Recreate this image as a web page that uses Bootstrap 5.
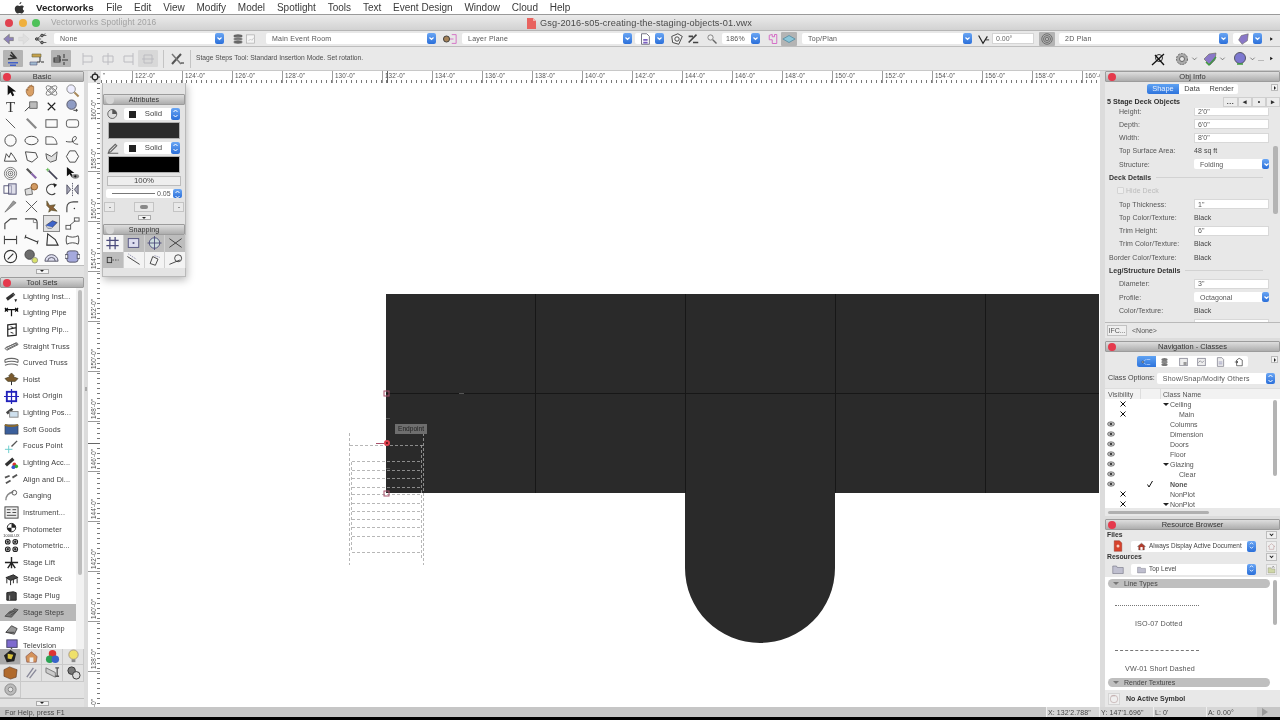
<!DOCTYPE html>
<html lang="en">

<head>
  <meta charset="UTF-8">
  <meta name="viewport" content="width=device-width, initial-scale=1.0">
  <title>Vectorworks Spotlight 2016</title>
  <link href="https://cdn.jsdelivr.net/npm/bootstrap@5.3.0/dist/css/bootstrap.min.css" rel="stylesheet">
  <style>
    html, body { margin: 0; width: 1280px; height: 720px; overflow: hidden; background: #000; }
    body { font-family: "Liberation Sans", Arial, sans-serif; color: #333; font-size: 7.2px; line-height: 1; }
    svg { display: block; }
    .app { width: 1280px; height: 720px; overflow: hidden; filter: blur(.35px); background: #e6e6e6; }
    .app > *:not(.main), .right > * { flex: none; }

    .menubar { height: 15px; background: #fff; padding: 1px 0 0 14px; font-size: 10px; color: #3a3a3a; border-bottom: 1px solid #9a9a9a; }
    .menubar span { margin-right: 11.85px; }
    .menubar .apple { width: 11px; height: 12px; margin-right: 11px; }
    .menubar .brand { font-weight: 700; font-size: 9.7px; color: #222; margin-right: 12.5px; }

    .titlebar { height: 16px; background: linear-gradient(#ebebeb, #d2d2d2); border-bottom: 1px solid #b5b5b5; position: relative; }
    .light { width: 8px; height: 8px; border-radius: 50%; }
    .l-red { background: #e0424f; } .l-yellow { background: #efb03f; } .l-green { background: #4fc15a; }
    .lights { padding-left: 5px; gap: 5.5px; }
    .app-name { font-size: 8.4px; color: #a2a2a2; margin-left: 11px; letter-spacing: .15px; }
    .doc-name { position: absolute; left: 527px; top: 3px; gap: 4px; font-size: 9.2px; color: #4a4a4a; letter-spacing: .12px; }

    .tb1 { height: 16px; background: #e8e8e8; padding-left: 2px; border-bottom: 1px solid #bdbdbd; }
    .tb2 { height: 24px; background: #e9e9e9; padding-left: 3px; border-bottom: 1px solid #c8c8c8; }
    .tb2 .tb-ic svg { width: 16px; height: 16px; }
    .tb2 .tb-ic.w7 svg { width: 7px; height: 7px; }
    .tb-ic { flex: none; display: flex; align-items: center; justify-content: center; }
    .sel { flex: none; height: 11px; background: #fff; border-radius: 2px; padding-left: 6px; color: #555; font-size: 7px; letter-spacing: .25px; }
    .step { flex: none; width: 9px; height: 11px; border-radius: 2px; background: linear-gradient(#6aa6f4, #2b6fd9); }
    .step svg { width: 9px; height: 11px; }
    .on { background: #b4b4b4; border-radius: 1px; }
    .w7 { width: 7px; } .w11 { width: 11px; } .w12 { width: 12px; } .w13 { width: 13px; } .w14 { width: 14px; }
    .w16 { width: 16px; } .w17 { width: 17px; } .w18 { width: 18px; } .w20 { width: 20px; } .w21 { width: 21px; }
    .w29 { width: 29px; } .w38 { width: 38px; } .w42 { width: 42px; } .w169 { width: 169px; } .w170 { width: 170px; }
    .m1 { margin-left: 1px; } .m2 { margin-left: 2px; } .m3 { margin-left: 3px; } .m4 { margin-left: 4px; }
    .m5 { margin-left: 5px; } .m6 { margin-left: 6px; } .m7 { margin-left: 7px; } .m8 { margin-left: 8px; }
    .m10 { margin-left: 10px; }
    .h17 { height: 17px; }
    .sep { flex: none; width: 1px; height: 18px; background: #c4c4c4; }
    .faded { opacity: .3; }
    .hint { font-size: 6.7px; color: #4d4d4d; margin-left: 5px; }
    .field { flex: none; height: 11px; background: #fff; border: 1px solid #d5d5d5; padding-left: 3px; font-size: 7px; color: #666; }
    .tb-right { margin-left: auto; padding-right: 5px; }

    .main { min-height: 0; overflow: hidden; }
    .pal-title { flex: none; height: 11px; background: linear-gradient(#dedede, #adadad); border: 1px solid #9c9c9c; border-radius: 1px; font-size: 7.5px; color: #333; position: relative; }
    .pal-title .dot { position: absolute; left: 2px; top: 1px; width: 8px; height: 8px; border-radius: 50%; background: #e5394c; }
    .pal-title .dot.off { background: #d5d5d5; }

    .left { flex: none; width: 84px; background: #fff; }
    .tools { display: grid; grid-template-columns: repeat(4, 20.75px); grid-auto-rows: 16.6px; flex: none; background: #fafafa; }
    .tools .cell { display: flex; align-items: center; justify-content: center; }
    .tools svg { width: 15px; height: 15px; }
    .tools .picked svg { outline: 1px solid #8a8a8a; background: #e2e2e2; }
    .pal-foot { flex: none; background: #e2e2e2; border-top: 1px solid #bdbdbd; }
    .f-tools { height: 12.4px; }
    .f-cats { height: 9px; }
    .mini { width: 13px; height: 5px; background: #f4f4f4; border: 1px solid #aaa; display: flex; align-items: center; justify-content: center; }
    .mini::after { content: ""; border: 2px solid transparent; border-top-color: #222; border-bottom: 0; }
    .sets { min-height: 0; }
    .set-list { margin: 0; padding: 0; list-style: none; width: 76px; }
    .set-list li { height: 16.65px; display: flex; align-items: center; gap: 3px; padding-left: 3px; font-size: 7.3px; color: #404040; letter-spacing: .12px; white-space: nowrap; }
    .set-list li.picked { background: #b8b8b8; }
    .set-list svg { width: 17px; height: 15px; flex: none; }
    .track { flex: none; width: 8px; padding: 2px 2px 0; background: #f2f2f2; }
    .thumb { background: #bdbdbd; border-radius: 2px; }
    .t-sets { height: 285px; }
    .cats { display: grid; grid-template-columns: repeat(4, 21px); grid-auto-rows: 16.4px; flex: none; background: #e2e2e2; }
    .cats .cell { display: flex; align-items: center; justify-content: center; border-right: 1px solid #c9c9c9; border-bottom: 1px solid #c9c9c9; }
    .cats .cell.picked { background: #a9a9a9; }
    .cats svg { width: 15px; height: 15px; }

    .gutter-l { flex: none; width: 4px; background: #dcdcdc; }
    .gutter-l i { width: 2px; height: 4px; background: #aaa; }
    .gutter-r { flex: none; width: 5px; background: #dcdcdc; }
    .center { min-width: 0; }
    .hruler { flex: none; height: 12px; background: #fff; position: relative; overflow: hidden; }
    .hruler::after { content: ""; position: absolute; left: 13px; right: 0; bottom: 0; height: 3px; background: repeating-linear-gradient(90deg, #777 0 1px, transparent 1px 5px); }
    .corner { flex: none; width: 13px; display: flex; align-items: center; justify-content: center; background: #e6e6e6; }
    .corner svg { width: 10px; height: 10px; }
    .hcell { flex: none; width: 50px; border-left: 1px solid #9c9c9c; padding: 1.5px 0 0 2px; font-size: 6.3px; color: #555; letter-spacing: .1px; white-space: nowrap; }
    .hcell.first { width: 31px; border-left: 0; }
    .vruler { flex: none; width: 12px; background: #fff; overflow: hidden; position: relative; }
    .vruler::after { content: ""; position: absolute; top: 0; bottom: 0; right: 0; width: 3px; background: repeating-linear-gradient(180deg, #777 0 1px, transparent 1px 5px); }
    .vcell { height: 50px; width: 12px; display: flex; justify-content: flex-start; align-items: flex-start; writing-mode: vertical-rl; transform: rotate(180deg); padding: 2px 3px 0 0; font-size: 6.3px; color: #555; white-space: nowrap; overflow: hidden; letter-spacing: .1px; }
    .vcell.first { height: 39px; }
    .vruler .vcell { border-top: 1px solid #9c9c9c; }
    .vruler .vcell.first { border-top: 0; }
    .hruler .mouse { position: absolute; left: 299px; top: 0; bottom: 0; width: 1px; background: #666; z-index: 1; }
    .vruler .mouse { position: absolute; top: 360px; left: 0; right: 0; height: 1px; background: #666; z-index: 1; }
    .canvas { position: relative; background: #fff; min-width: 0; overflow: hidden; }
    .canvas > svg { position: absolute; left: 0; top: 0; }
    .snap-tip { position: absolute; left: 295px; top: 341px; width: 32px; height: 10px; background: #6e6e6e; color: #1f1f1f; font-size: 6.6px; line-height: 10px; text-align: center; }

    .float { position: absolute; left: 2px; top: -1px; width: 84px; height: 195px; background: #e4e4e4; border: 1px solid #b9b9b9; box-shadow: 1px 3px 8px rgba(0, 0, 0, .28); }
    .float .drag { height: 11px; }
    .float .pal-title { font-size: 7.2px; }
    .a-row { height: 12px; margin: 3px 5px 0 4px; }
    .pick { width: 58px; height: 12px; background: #fff; border-radius: 2px; font-size: 7.8px; color: #444; padding-left: 5px; margin-left: 5px; }
    .pick b { width: 7px; height: 7px; background: #222; flex: none; }
    .pick span { flex-grow: 1; text-align: center; }
    .pick .step { height: 12px; }
    .swatch { height: 17px; margin: 2px 5px 0; background: #2b2b2b; border: 1px solid #b0b0b0; }
    .swatch.black { background: #000; }
    .opacity { height: 10px; margin: 3px 4px 0; background: #eee; border: 1px solid #bbb; font-size: 7.8px; color: #444; }
    .weight { height: 9px; margin: 3px 3px 0; background: #fff; border-radius: 2px; font-size: 7px; color: #555; padding-left: 6px; }
    .weight i { width: 43px; height: 1px; background: #777; margin-right: 2px; flex: none; }
    .weight .step { height: 9px; margin-left: auto; }
    .a-btns { margin: 4px 1px 0; }
    .sq { height: 10px; background: #e9e9e9; border: 1px solid #c4c4c4; display: flex; align-items: center; justify-content: center; }
    .sq i { width: 8px; height: 4px; background: #888; border-radius: 2px; }
    .sq.w11 i { width: 2px; height: 1px; }
    .mini-row { padding: 3px 0 4px; }
    .snap { display: grid; grid-template-columns: repeat(4, 20.75px); grid-auto-rows: 16.5px; }
    .snap div { display: flex; align-items: center; justify-content: center; background: #f3f3f3; border-right: 1px solid #d0d0d0; }
    .snap div.dim { background: #bdbdbd; }
    .snap svg { width: 17px; height: 14px; }

    .right { flex: none; width: 175px; background: #e8e8e8; }
    .seg { background: #fff; border-radius: 2px; overflow: hidden; font-size: 7.4px; color: #444; }
    .seg span { display: flex; align-items: center; justify-content: center; height: 10px; }
    .seg .active { background: linear-gradient(#5ea2f3, #2f74dc); color: #e8f1ff; }
    .w32 { width: 32px; } .w26 { width: 26px; } .w33 { width: 33px; }
    .obj-tabs { height: 13px; position: relative; }
    .arrow-box { position: absolute; right: 2px; top: 2px; width: 7px; height: 7px; background: #f2f2f2; border: 1px solid #bbb; }
    .arrow-box::after { content: ""; position: absolute; left: 2px; top: 1px; border: 2px solid transparent; border-left-color: #222; border-right: 0; }
    .obj-head { height: 13px; font-weight: 700; font-size: 7.2px; color: #2f2f2f; white-space: nowrap; padding-left: 2px; }
    .obj-btn { width: 14px; height: 10px; background: #ececec; border: 1px solid #cfcfcf; display: flex; align-items: center; justify-content: center; font-size: 7px; }
    .obj-btn.wide { width: 15px; letter-spacing: .5px; font-weight: 700; }
    .obj-scroll { height: 214px; overflow: hidden; }
    .obj-rows { flex-grow: 1; margin-top: -3.65px; min-width: 0; }
    .pr { height: 13.3px; font-size: 7px; color: #555; padding-left: 14px; white-space: nowrap; letter-spacing: .05px; }
    .pr .lab { width: 75px; flex: none; }
    .pr .val { color: #444; }
    .pr .inp { width: 75px; height: 10px; background: #fff; border: 1px solid #d8d8d8; padding-left: 3px; color: #555; }
    .pr .drop { width: 75px; height: 10px; background: #fff; border-radius: 2px; padding-left: 6px; color: #555; }
    .pr .drop .step { margin-left: auto; width: 7px; height: 10px; }
    .pr.flush { padding-left: 4px; }
    .pr.flush .lab { width: 85px; }
    .pr.group { font-weight: 700; color: #333; padding-left: 4px; }
    .pr.group::after { content: ""; flex-grow: 1; height: 1px; background: #d2d2d2; margin: 0 10px 0 5px; }
    .pr.off { color: #bbb; }
    .pr.off i { width: 7px; height: 7px; background: #eee; border: 1px solid #d4d4d4; border-radius: 1px; margin-right: 2px; margin-left: -2px; }
    .r-track { flex: none; width: 7px; padding-right: 2px; }
    .t-obj { height: 68px; margin-top: 38px; width: 5px; background: #b4b4b4; border-radius: 2px; }
    .obj-foot { height: 16px; border-top: 1px solid #b9b9b9; padding-left: 2px; font-size: 7px; color: #555; }
    .ifc { width: 20px; height: 11px; border: 1px solid #c2c2c2; background: #efefef; margin-right: 5px; text-align: center; line-height: 10px; }
    .panel-gap { height: 3px; background: #dcdcdc; }

    .nav-icons { height: 19px; position: relative; }
    .nav-icons .arrow-box { top: 4px; }
    .nav-icons .seg span { width: 18.5px; height: 11px; }
    .nav-icons svg { width: 11px; height: 10px; }
    .opts { height: 14px; padding-left: 3px; font-size: 7.2px; color: #444; }
    .opts .sel { width: 118px; margin-left: 2px; padding-right: 0; height: 11px; }
    .opts .sel .step { margin-left: auto; }
    .cl-head { height: 11px; margin-top: 3px; background: #f2f2f2; border-top: 1px solid #ddd; font-size: 7px; color: #555; padding-left: 3px; }
    .cl-head span { height: 100%; display: flex; align-items: center; }
    .cl-head .c1 { width: 32px; }
    .cl-head .c2 { width: 20px; border-left: 1px solid #ddd; }
    .cl-head .c3 { padding-left: 2px; border-left: 1px solid #ddd; }
    .cl-list { background: #fff; height: 109px; overflow: hidden; position: relative; }
    .cl-rows { flex-grow: 1; min-width: 0; }
    .cl { height: 10px; font-size: 7px; color: #555; }
    .cl .v1 { width: 12px; flex: none; padding-left: 2px; }
    .cl .v2 { width: 23px; flex: none; padding-left: 2px; }
    .cl .v3 { width: 21px; flex: none; padding-left: 6px; }
    .cl .v1 svg, .cl .v2 svg, .cl .v3 svg { width: 8px; height: 8px; }
    .cl .tw { width: 6px; flex: none; margin-left: 2px; }
    .cl .tw::after { content: ""; display: block; width: 0; border: 3px solid transparent; border-top-color: #222; border-bottom: 0; }
    .cl .nm { margin-left: 9px; }
    .cl .nm.sub { margin-left: 18px; }
    .cl .nm.kid { margin-left: 1px; }
    .t-cl { height: 76px; width: 4px; margin-top: 1px; background: #b4b4b4; border-radius: 2px; }
    .hbar { height: 8px; padding: 3px 0 0 3px; }
    .hbar i { display: block; width: 101px; height: 3px; background: #b0b0b0; border-radius: 2px; }

    .rb-lab { padding-left: 2px; font-weight: 700; font-size: 6.8px; color: #333; position: relative; }
    .h10 { height: 10px; } .h11 { height: 11px; }
    .rb-row { height: 12px; }
    .rb-row .doc { width: 26px; flex: none; display: flex; justify-content: center; }
    .rb-row .doc svg { width: 12px; height: 12px; }
    .rb-row .sel { width: 125px; height: 11px; padding-left: 6px; gap: 3px; font-size: 6.4px; color: #444; letter-spacing: 0; white-space: nowrap; }
    .rb-row .sel svg { width: 9px; height: 9px; flex: none; }
    .rb-row .sel .step { margin-left: auto; }
    .rb-btn { position: absolute; right: 3px; top: 1px; width: 11px; height: 8px; background: #f0f0f0; border: 1px solid #bdbdbd; display: flex; align-items: center; justify-content: center; }
    .rb-btn::after { content: ""; width: 3px; height: 3px; border: solid #222; border-width: 0 1px 1px 0; transform: rotate(45deg) translate(-1px, -1px); }
    .rb-tool { width: 11px; height: 11px; background: #efefef; border: 1px solid #d0d0d0; margin-left: 10px; flex: none; }
    .rb-tool svg { width: 9px; height: 9px; }
    .res { height: 113px; margin-top: 2px; background: #fff; overflow: hidden; }
    .res-body { flex-grow: 1; min-width: 0; padding: 2px 3px 0; }
    .pill { height: 9px; background: #bfbfbf; border-radius: 5px; font-size: 7px; color: #444; padding-left: 5px; }
    .pill::before { content: ""; border: 3px solid transparent; border-top-color: #777; border-bottom: 0; margin-right: 5px; }
    .res-line { border-top: 1px dashed #777; width: 84px; margin-left: 7px; }
    .res-line.dots { border-top-style: dotted; margin-top: 17px; }
    .res-line.dash { margin-top: 23px; }
    .res-name { font-size: 7.2px; color: #555; letter-spacing: .12px; }
    .res-name.n1 { margin: 14px 0 0 27px; }
    .res-name.n2 { margin: 14px 0 6px 17px; }
    .t-res { height: 45px; width: 4px; margin-top: 3px; background: #b4b4b4; border-radius: 2px; }
    .res-foot { height: 17px; font-weight: 700; font-size: 7px; color: #333; padding-left: 3px; gap: 6px; }
    .res-foot .box { width: 12px; height: 12px; background: #efefef; border: 1px solid #d5d5d5; }
    .res-foot svg { width: 10px; height: 10px; }

    .status { height: 10px; background: #c6c6c6; font-size: 7px; color: #444; padding-left: 5px; letter-spacing: .1px; }
    .readout { height: 10px; background: #d6d6d6; border-left: 1px solid #eee; padding-left: 1px; white-space: nowrap; }
    .r1 { width: 53px; margin-left: auto; } .r2 { width: 54px; } .r3 { width: 53px; } .r4 { width: 51px; }
    .play { width: 0; border: 4px solid transparent; border-left: 6px solid #999; border-right: 0; margin: 0 12px 0 5px; }
    .bottom { height: 3px; background: #000; }
  </style>
</head>

<body>
  <div class="app d-flex flex-column">

    <nav class="menubar d-flex align-items-center">
      <svg class="apple" viewBox="0 0 12 14"><path fill="#333" d="M8.200 0c.1 1.200-.9 2.500-2.300 2.500C5.800 1.300 7 .1 8.200 0zM11.500 10.200c-.6 1.400-1.700 3.300-3 3.300-.9 0-1.300-.6-2.400-.6s-1.500.6-2.400.6C2.200 13.500.500 10.800.500 8c0-2.500 1.600-4 3.100-4 1 0 1.800.7 2.400.7S7.400 4 8.600 4c.9 0 2 .5 2.600 1.400-2 1.200-1.700 4 .3 4.800z"/></svg>
      <span class="brand">Vectorworks</span>
      <span>File</span><span>Edit</span><span>View</span><span>Modify</span><span>Model</span><span>Spotlight</span><span>Tools</span><span>Text</span><span>Event Design</span><span>Window</span><span>Cloud</span><span>Help</span>
    </nav>

    <div class="titlebar d-flex align-items-center">
      <div class="lights d-flex">
        <i class="light l-red"></i><i class="light l-yellow"></i><i class="light l-green"></i>
      </div>
      <span class="app-name">Vectorworks Spotlight 2016</span>
      <div class="doc-name d-flex align-items-center">
        <svg width="9" height="11" viewBox="0 0 9 11"><path fill="#e8635f" d="M0 0h6l3 3v8H0z"/><path fill="#f3b1ad" d="M6 0l3 3H6z"/></svg>
        <span>Gsg-2016-s05-creating-the-staging-objects-01.vwx</span>
      </div>
    </div>

    <div class="tb1 d-flex align-items-center">
      <span class="tb-ic w13" data-i="back"></span>
      <span class="tb-ic w14 m2 faded" data-i="fwd"></span>
      <span class="tb-ic w17 m2" data-i="classes"></span>
      <div class="sel w170 m4 d-flex align-items-center"><span>None</span><span class="step ms-auto" data-c></span></div>
      <span class="tb-ic w12 m8" data-i="stack"></span>
      <span class="tb-ic w11 m1" data-i="sheet"></span>
      <div class="sel w170 m10 d-flex align-items-center"><span>Main Event Room</span><span class="step ms-auto" data-c></span></div>
      <span class="tb-ic w18 m5" data-i="layer"></span>
      <div class="sel w170 m3 d-flex align-items-center"><span>Layer Plane</span><span class="step ms-auto" data-c></span></div>
      <div class="sel w29 m3 d-flex align-items-center px-0"><span class="tb-ic w20" data-i="docpage"></span><span class="step ms-auto" data-c></span></div>
      <span class="tb-ic w14 m6" data-i="fit"></span>
      <span class="tb-ic w14 m2" data-i="fit2"></span>
      <span class="tb-ic w12 m6" data-i="mag"></span>
      <div class="sel w38 m4 d-flex align-items-center ps-1"><span>186%</span><span class="step ms-auto" data-c></span></div>
      <span class="tb-ic w12 m7" data-i="pinkpage"></span>
      <span class="tb-ic w16 m2 on" data-i="iso"></span>
      <div class="sel w170 m5 d-flex align-items-center"><span>Top/Plan</span><span class="step ms-auto" data-c></span></div>
      <span class="tb-ic w14 m4" data-i="angle"></span>
      <div class="field w42 m2 d-flex align-items-center">0.00°</div>
      <span class="tb-ic w16 m5 on" data-i="rings"></span>
      <div class="sel w169 m4 d-flex align-items-center"><span>2D Plan</span><span class="step ms-auto" data-c></span></div>
      <div class="sel w29 m5 d-flex align-items-center px-0"><span class="tb-ic w20" data-i="purple"></span><span class="step ms-auto" data-c></span></div>
      <span class="tb-ic w7 m6" data-i="tri"></span>
    </div>

    <div class="tb2 d-flex align-items-center">
      <span class="tb-ic w20 h17 on" data-i="steps1"></span>
      <span class="tb-ic w20 m3" data-i="steps2"></span>
      <span class="tb-ic w20 h17 m5 on" data-i="steps3"></span>
      <span class="tb-ic w20 m7 faded" data-i="al1"></span>
      <span class="tb-ic w20 faded" data-i="al2"></span>
      <span class="tb-ic w20 faded" data-i="al3"></span>
      <span class="tb-ic w20 h17 faded on" data-i="al4"></span>
      <span class="sep m5"></span>
      <span class="tb-ic w20 m3" data-i="tools"></span>
      <span class="sep m3"></span>
      <span class="hint">Stage Steps Tool: Standard Insertion Mode. Set rotation.</span>
      <div class="d-flex align-items-center tb-right">
        <span class="tb-ic w18" data-i="snapoff"></span>
        <span class="tb-ic w18 m6" data-i="gear"></span><span class="tb-ic w7" data-i="chev"></span>
        <span class="tb-ic w18 m3" data-i="leafg"></span><span class="tb-ic w7" data-i="chev"></span>
        <span class="tb-ic w18 m5" data-i="leafp"></span><span class="tb-ic w7" data-i="chev"></span>
        <span class="m2">...</span>
        <span class="tb-ic w7 m4" data-i="tri"></span>
      </div>
    </div>

    <div class="main d-flex flex-grow-1">

      <div class="left d-flex flex-column">
        <div class="pal-title d-flex align-items-center justify-content-center"><i class="dot"></i>Basic</div>
        <div class="tools" id="basicTools"></div>
        <div class="pal-foot f-tools d-flex align-items-center justify-content-center"><i class="mini"></i></div>
        <div class="pal-title d-flex align-items-center justify-content-center"><i class="dot"></i>Tool Sets</div>
        <div class="sets d-flex flex-grow-1 overflow-hidden">
          <ul class="set-list" id="toolSets"></ul>
          <div class="track"><div class="thumb t-sets"></div></div>
        </div>
        <div class="cats" id="cats"></div>
        <div class="pal-foot f-cats d-flex align-items-center justify-content-center"><i class="mini"></i></div>
      </div>

      <div class="gutter-l d-flex align-items-center justify-content-center"><i></i></div>

      <div class="center d-flex flex-column flex-grow-1">
        <div class="hruler d-flex" id="hRuler"><div class="corner" data-i="target"></div><i class="mouse"></i></div>
        <div class="d-flex flex-grow-1 overflow-hidden">
          <div class="vruler" id="vRuler"><i class="mouse"></i></div>
          <div class="canvas flex-grow-1">
            <svg width="1000" height="624" viewBox="100 83 1000 624">
              <path fill="#2a2a2a" d="M386 294H1099V493H835V568A75 75 0 0 1 685 568V493H386z"/>
              <path stroke="#171717" stroke-width="1" d="M386 393.500H1099M535.500 294V493M685.500 294V493M835.500 294V493M985.500 294V493"/>
              <path stroke="#555" d="M386 418.500h4M386 468.500h4M459 393.500h5"/>
              <g fill="none" stroke="#a5a5a5" stroke-width=".8" stroke-dasharray="3 2">
                <path d="M349.500 433V565M351.500 462V552M421.500 445V560M423.500 433V565"/>
                <path d="M350 445.500H423M352 461.500H421M352 470.500H421M352 478.500H421M352 487.500H421M352 494.500H421M352 503.500H421M352 511.500H421M352 519.500H421M352 527.500H421M352 536.500H421M352 552.500H421"/>
              </g>
              <g fill="none" stroke="#a8506a">
                <rect x="384" y="391" width="5" height="5"/>
                <rect x="384" y="491" width="5" height="5"/>
                <path d="M376 443.500h8"/>
              </g>
              <circle cx="387" cy="443" r="3" fill="#e0414f"/>
              <circle cx="387" cy="443" r="1" fill="#411"/>
            </svg>
            <div class="snap-tip">Endpoint</div>

            <div class="float">
              <div class="drag"></div>
              <div class="pal-title d-flex align-items-center justify-content-center"><i class="dot off"></i>Attributes</div>
              <div class="a-row d-flex align-items-center">
                <span class="tb-ic w12" data-i="fill"></span>
                <div class="pick d-flex align-items-center"><b></b><span>Solid</span><i class="step" data-u></i></div>
              </div>
              <div class="swatch"></div>
              <div class="a-row d-flex align-items-center">
                <span class="tb-ic w12" data-i="pen"></span>
                <div class="pick d-flex align-items-center"><b></b><span>Solid</span><i class="step" data-u></i></div>
              </div>
              <div class="swatch black"></div>
              <div class="opacity d-flex align-items-center justify-content-center">100%</div>
              <div class="weight d-flex align-items-center"><i></i>0.05<span class="step" data-u></span></div>
              <div class="a-btns d-flex justify-content-between">
                <div class="sq w11"><i></i></div><div class="sq w20"><i></i></div><div class="sq w11"><i></i></div>
              </div>
              <div class="d-flex justify-content-center mini-row"><i class="mini"></i></div>
              <div class="pal-title d-flex align-items-center justify-content-center"><i class="dot off"></i>Snapping</div>
              <div class="snap" id="snap"></div>
            </div>
          </div>
        </div>
      </div>

      <div class="gutter-r"></div>

      <div class="right d-flex flex-column">
        <div class="pal-title d-flex align-items-center justify-content-center"><i class="dot"></i>Obj Info</div>
        <div class="obj-tabs d-flex justify-content-center align-items-center">
          <div class="seg d-flex">
            <span class="active w32">Shape</span><span class="w26">Data</span><span class="w33">Render</span>
          </div>
          <i class="arrow-box"></i>
        </div>
        <div class="obj-head d-flex align-items-center">
          <span>5 Stage Deck Objects</span>
          <div class="d-flex ms-auto">
            <span class="obj-btn wide">...</span><span class="obj-btn">◂</span><span class="obj-btn">•</span><span class="obj-btn">▸</span>
          </div>
        </div>
        <div class="obj-scroll d-flex">
          <div class="obj-rows">
            <div class="pr d-flex align-items-center"><span class="lab">Height:</span><span class="inp d-flex align-items-center">2'0"</span></div>
            <div class="pr d-flex align-items-center"><span class="lab">Depth:</span><span class="inp d-flex align-items-center">6'0"</span></div>
            <div class="pr d-flex align-items-center"><span class="lab">Width:</span><span class="inp d-flex align-items-center">8'0"</span></div>
            <div class="pr d-flex align-items-center"><span class="lab">Top Surface Area:</span><span class="val">48 sq ft</span></div>
            <div class="pr d-flex align-items-center"><span class="lab">Structure:</span><span class="drop d-flex align-items-center">Folding<i class="step" data-c></i></span></div>
            <div class="pr group d-flex align-items-center">Deck Details</div>
            <div class="pr off d-flex align-items-center"><i></i>Hide Deck</div>
            <div class="pr d-flex align-items-center"><span class="lab">Top Thickness:</span><span class="inp d-flex align-items-center">1"</span></div>
            <div class="pr d-flex align-items-center"><span class="lab">Top Color/Texture:</span><span class="val">Black</span></div>
            <div class="pr d-flex align-items-center"><span class="lab">Trim Height:</span><span class="inp d-flex align-items-center">6"</span></div>
            <div class="pr d-flex align-items-center"><span class="lab">Trim Color/Texture:</span><span class="val">Black</span></div>
            <div class="pr flush d-flex align-items-center"><span class="lab">Border Color/Texture:</span><span class="val">Black</span></div>
            <div class="pr group d-flex align-items-center">Leg/Structure Details</div>
            <div class="pr d-flex align-items-center"><span class="lab">Diameter:</span><span class="inp d-flex align-items-center">3"</span></div>
            <div class="pr d-flex align-items-center"><span class="lab">Profile:</span><span class="drop d-flex align-items-center">Octagonal<i class="step" data-c></i></span></div>
            <div class="pr d-flex align-items-center"><span class="lab">Color/Texture:</span><span class="val">Black</span></div>
            <div class="pr d-flex align-items-center"><span class="lab"></span><span class="inp"></span></div>
          </div>
          <div class="r-track"><div class="t-obj"></div></div>
        </div>
        <div class="obj-foot d-flex align-items-center"><span class="ifc">IFC...</span><span>&lt;None&gt;</span></div>
        <div class="panel-gap"></div>

        <div class="pal-title d-flex align-items-center justify-content-center"><i class="dot"></i>Navigation - Classes</div>
        <div class="nav-icons d-flex justify-content-center align-items-center">
          <div class="seg d-flex" id="navSeg"></div>
          <i class="arrow-box"></i>
        </div>
        <div class="opts d-flex align-items-center">
          <span>Class Options:</span>
          <div class="sel d-flex align-items-center"><span>Show/Snap/Modify Others</span><span class="step" data-u></span></div>
        </div>
        <div class="cl-head d-flex align-items-center">
          <span class="c1">Visibility</span><span class="c2"></span><span class="c3">Class Name</span>
        </div>
        <div class="cl-list d-flex">
          <div class="cl-rows" id="classRows"></div>
          <div class="r-track"><div class="t-cl"></div></div>
        </div>
        <div class="hbar"><i></i></div>
        <div class="panel-gap"></div>

        <div class="pal-title d-flex align-items-center justify-content-center"><i class="dot"></i>Resource Browser</div>
        <div class="rb-lab h10 d-flex align-items-center">Files<i class="rb-btn"></i></div>
        <div class="rb-row d-flex align-items-center">
          <span class="doc" data-i="reddoc"></span>
          <div class="sel d-flex align-items-center"><span data-i="home"></span><span>Always Display Active Document</span><span class="step" data-u></span></div>
          <span class="rb-tool tb-ic" data-i="homeg"></span>
        </div>
        <div class="rb-lab h11 d-flex align-items-center">Resources<i class="rb-btn"></i></div>
        <div class="rb-row d-flex align-items-center">
          <span class="doc" data-i="folder"></span>
          <div class="sel d-flex align-items-center"><span data-i="folder"></span><span>Top Level</span><span class="step" data-u></span></div>
          <span class="rb-tool tb-ic" data-i="foldup"></span>
        </div>
        <div class="res d-flex">
          <div class="res-body">
            <div class="pill d-flex align-items-center">Line Types</div>
            <div class="res-line dots"></div>
            <div class="res-name n1">ISO-07 Dotted</div>
            <div class="res-line dash"></div>
            <div class="res-name n2">VW-01 Short Dashed</div>
            <div class="pill d-flex align-items-center">Render Textures</div>
          </div>
          <div class="r-track"><div class="t-res"></div></div>
        </div>
        <div class="res-foot d-flex align-items-center"><span class="box tb-ic" data-i="symbol"></span><span>No Active Symbol</span></div>
      </div>
    </div>

    <div class="status d-flex align-items-center">
      <span>For Help, press F1</span>
      <span class="readout r1 d-flex align-items-center">X: 132'2.788"</span>
      <span class="readout r2 d-flex align-items-center">Y: 147'1.696"</span>
      <span class="readout r3 d-flex align-items-center">L: 0'</span>
      <span class="readout r4 d-flex align-items-center">A: 0.00°</span>
      <i class="play"></i>
    </div>
    <div class="bottom"></div>
  </div>

  <script src="https://cdn.jsdelivr.net/npm/bootstrap@5.3.0/dist/js/bootstrap.bundle.min.js"></script>
  <script>
    const CHEV_D = '<svg viewBox="0 0 9 11"><path fill="none" stroke="#fff" stroke-width="1.200" d="M2.500 4.500l2 2 2-2"/></svg>';
    const CHEV_UD = '<svg viewBox="0 0 9 11"><path fill="none" stroke="#fff" stroke-width="1" d="M2.500 4l2-2 2 2M2.500 7l2 2 2-2"/></svg>';

    // every icon is drawn on a 16x16 box, stroke #333 and no fill unless a shape says otherwise
    const ICONS = {
      arrowTool: '<path fill="#111" stroke="none" d="M5 2v11l3-3 2 4 2-1-2-4h4z"/>',
      hand: '<path fill="#d9a066" stroke="#7a4a20" stroke-width=".6" d="M4 8V5c0-1 1.500-1 1.500 0V3.500c0-1 1.600-1 1.600 0V3c0-1 1.600-1 1.600 0v1c0-1 1.600-1 1.600 0v5c0 3-1.500 5-4 5s-3-2-4-4.500L2.500 7c0-1 1-1 1.500 1z"/>',
      fly: '<g stroke="#666" stroke-width=".8"><circle cx="8" cy="8" r="2"/><ellipse cx="8" cy="8" rx="7" ry="3" transform="rotate(40 8 8)"/><ellipse cx="8" cy="8" rx="7" ry="3" transform="rotate(-40 8 8)"/></g>',
      magTool: '<circle cx="6.500" cy="6.500" r="4.500" fill="#eef" stroke="#888"/><path stroke="#a8885a" stroke-width="2.200" d="M10 10l4.500 4.500"/>',
      text: '<text x="8" y="14" font-family="Liberation Serif" font-size="16" text-anchor="middle" fill="#333" stroke="none">T</text>',
      callout: '<path fill="#bbb" stroke="#666" d="M6 3h8v7H6z"/><path d="M1 13l5-5"/>',
      xmark: '<path stroke="#222" stroke-width="1.200" d="M4 4l8 8M12 4l-8 8"/>',
      sphere: '<circle cx="7" cy="6" r="5" fill="#8f9cc4" stroke="#556"/><path stroke="#222" d="M9 12h4l-1-1.500M13 12l-1 1.500"/>',
      line: '<path stroke="#555" d="M3 3l10 10"/>',
      dbl: '<path stroke="#888" stroke-width="2.400" d="M3 3l10 10"/>',
      rect: '<rect x="2" y="4" width="12" height="8" stroke="#555"/>',
      rrect: '<rect x="1.500" y="4" width="13" height="8" rx="2.500" stroke="#555"/>',
      circle: '<circle cx="8" cy="8" r="6" stroke="#444"/>',
      ellipse: '<ellipse cx="8" cy="8" rx="7" ry="4.500" stroke="#444"/>',
      arc: '<path stroke="#555" d="M2 4h5c4 0 6 3 7 8H2z"/>',
      squig: '<path stroke="#444" d="M1 9c4 1 9 1 11-3 1-3-3-3-4 0-1 4 2 6 6 6"/>',
      free: '<path stroke="#444" d="M1.500 13l2-8 3 4 2-5 3 4 3 5z"/>',
      poly: '<path stroke="#444" d="M1.500 3l11 1 2 5-6 5-5-2z"/>',
      fold: '<path fill="#ddd" stroke="#555" d="M2 5l6 3 6-5-1 9-6 2-4-3z"/>',
      hex: '<path stroke="#444" d="M5 2h6l3.500 6-3.500 6H5L1.500 8z"/>',
      spiral: '<g stroke="#777"><circle cx="8" cy="8" r="6.500"/><circle cx="8" cy="8" r="4.500"/><circle cx="8" cy="8" r="2.500"/></g><circle cx="8" cy="8" r="1" fill="#777" stroke="none"/>',
      dropper: '<path stroke="#555" stroke-width="2.400" d="M3 3l5 5"/><path stroke="#86a" stroke-width="2.400" d="M8 8l5 5"/>',
      wand: '<path stroke="#4a3" stroke-width=".8" d="M2 4h4M4 2v4"/><path stroke="#445" stroke-width="1.800" d="M5 5l9 9"/>',
      eyeArrow: '<path fill="#111" stroke="none" d="M2 1v10l3-2.500 2 3.500 1.500-1-2-3.500h3.500z"/><ellipse cx="11" cy="11" rx="4" ry="2.500" fill="#888" stroke="none"/><circle cx="11" cy="11" r="1.200" fill="#111" stroke="none"/>',
      boxes: '<rect x="1" y="4" width="8" height="8" stroke="#557"/><rect x="6" y="2" width="8" height="11" fill="#ccd" fill-opacity=".6" stroke="#557"/>',
      polyO: '<path fill="#ddd" stroke="#666" d="M1 8l7-2 1 7-7 1z"/><circle cx="11" cy="5" r="3.500" fill="#d29a62" stroke="#8a5a2a"/>',
      rotate: '<path stroke="#444" stroke-width="1.200" d="M11.500 3.500A5.500 5.500 0 1 0 12 12"/><path fill="#222" stroke="none" d="M10 1l4 2-3 3z"/>',
      mirror: '<path fill="#aab" stroke="#556" d="M2 3l4 5-4 5zM14 3l-4 5 4 5z"/><path stroke="#556" stroke-dasharray="1.500 1" d="M8 1v14"/>',
      knife: '<path fill="#999" stroke="#555" stroke-width=".6" d="M2 14L11 2l3 2-8 7z"/>',
      cross: '<path stroke="#555" d="M2 2l12 12M14 2L2 14"/>',
      bird: '<path fill="#8a6238" stroke="#442" stroke-width=".6" d="M3 2l3 5 6-1-2 3 4 4-6-1-3 2 1-4-3-3z"/>',
      fillet: '<path stroke="#444" stroke-width="1.200" d="M2 14V9c0-4 3-6 7-6h5"/><circle cx="10" cy="10" r=".8" fill="#333" stroke="none"/>',
      chamfer: '<path stroke="#444" stroke-width="1.200" d="M2 14V8l6-5h7"/>',
      corner: '<path stroke="#444" stroke-width="1.200" d="M1 3h9c3 0 4 2 4 4v7"/><path stroke="#888" d="M10 3v4h4"/>',
      eraser: '<path fill="#3d63c9" stroke="#223" stroke-width=".6" d="M2 10l7-5 5 2-6 6H4z"/><path fill="#ccc" stroke="none" d="M2 10l2 3h4l1-1z"/>',
      slider: '<rect x="10" y="2" width="5" height="3.500" fill="#fff" stroke="#555"/><rect x="1" y="10" width="5" height="4" fill="#fff" stroke="#555"/><path stroke="#555" d="M5 10l6-5"/>',
      dim: '<path stroke="#333" d="M1.500 4v9M14.500 4v9"/><path stroke="#333" stroke-width="1.200" d="M2 8h12"/>',
      dim2: '<path stroke="#333" stroke-width="1.200" d="M1 5l14 6"/><path stroke="#333" d="M2 3l-1 4M15 9l-1 4"/>',
      tri: '<path stroke="#333" stroke-width="1.200" d="M4 2l8 6 3 6H3z"/>',
      wave: '<path stroke="#444" d="M2 4c4 2 8 2 12 0 1 3 1 6 0 9-4-2-8-2-12 0-1-3-1-6 0-9z"/>',
      gauge: '<circle cx="8" cy="8" r="6.500" stroke="#333" stroke-width="1.200"/><path stroke="#333" stroke-width="1.200" d="M5 11l6-6"/>',
      spot: '<circle cx="6" cy="6" r="5" fill="#6c6c6c" stroke="#444"/><circle cx="11.500" cy="12" r="3" fill="#d9e26a" stroke="#998"/>',
      protractor: '<path fill="#dde" stroke="#556" d="M1 13a7 7 0 0 1 14 0z"/><path stroke="#556" d="M4 13a4 4 0 0 1 8 0"/>',
      blob: '<rect x="2" y="2" width="12" height="12" rx="3" fill="#a5a9dd" stroke="#556"/><rect x="0" y="6" width="3" height="4" fill="#fff" stroke="#556"/><rect x="13" y="6" width="3" height="4" fill="#fff" stroke="#556"/>',

      // tool sets
      lInst: '<path stroke="#333" stroke-width="3.500" d="M3 11l8-6"/><path fill="#222" stroke="none" d="M11 11h3l-1.500 3z"/><path stroke="#eee" d="M10 6l1 1"/>',
      lPipe: '<path stroke="#111" stroke-width="1.300" d="M1 5h14M8 5v7M1 3l3 4M4 3L1 7M12 3l3 4M15 3l-3 4"/>',
      lPip2: '<path stroke="#222" stroke-width="1.300" d="M4 3l9-1v12l-9 1zM4 8l9-2"/><path stroke="#222" d="M7 5l3 1M7 11l3 1"/>',
      truss: '<path fill="#eee" stroke="#666" d="M1 10l12-6 2 2-12 6z"/><path stroke="#666" d="M2 9l12-5M3 11l12-6"/>',
      curved: '<path stroke="#666" stroke-width="1.100" d="M1 5c5-2 9-2 14 0M1 8c5-2 9-2 14 0M1 5v3M15 5v3M1 11c5-2 9-2 14 0"/>',
      hoist: '<path fill="#7a5a2e" stroke="#332" stroke-width=".6" d="M8 1l3 3-1 1 5 2-3 3H4L1 7l5-2-1-1z"/><path stroke="#222" d="M8 10v4"/>',
      origin: '<rect x="3" y="3" width="10" height="10" fill="#fff" stroke="#22b" stroke-width="2"/><path stroke="#22b" stroke-width="1.300" d="M8 0v16M0 8h16"/>',
      lPos: '<path stroke="#444" stroke-width="3" d="M3 9l6-5"/><rect x="6" y="7" width="9" height="6" fill="#cfe0ee" stroke="#888"/>',
      soft: '<path fill="#3b5f9b" stroke="#333" stroke-width=".6" d="M1 3h14v10H1z"/><path stroke="#8c6a2a" stroke-width="2" d="M1 3c5 2 9 2 14 0"/>',
      focus: '<path stroke="#555" stroke-width="1.500" d="M8 8l6-6"/><path stroke="#6cc" d="M1 11h8M5 7v8"/>',
      lAcc: '<path stroke="#333" stroke-width="3.500" d="M2 11l8-7"/><circle cx="11" cy="10" r="2" fill="#d33" stroke="none"/><circle cx="13" cy="12" r="2" fill="#3a3" stroke="none"/><circle cx="10" cy="13" r="2" fill="#35c" stroke="none"/>',
      align: '<path stroke="#555" stroke-width="2" d="M1 6l5-2M2 12l5-3M9 6l5-3"/>',
      gang: '<path stroke="#888" stroke-width="1.500" d="M2 13c0-6 4-8 8-9"/><circle cx="11" cy="5" r="2.500" stroke="#555"/>',
      instr: '<rect x="1" y="2" width="14" height="12" fill="#eee" stroke="#444"/><path stroke="#444" d="M3 5h4M9 5h4M3 8h4M9 8h4M3 11h10"/>',
      photo: '<circle cx="8" cy="6" r="4.500" fill="#fff" stroke="#222"/><path fill="#222" stroke="none" d="M8 6V1.500A4.500 4.500 0 0 1 12.500 6zM8 6v4.500A4.500 4.500 0 0 1 3.500 6z"/><text x="8" y="15.500" font-family="Liberation Sans" font-size="4" text-anchor="middle" fill="#333" stroke="none">1000LUX</text>',
      photoM: '<g fill="#fff" stroke="#222" stroke-width="1.100"><circle cx="4" cy="4" r="2.500"/><circle cx="12" cy="4" r="2.500"/><circle cx="4" cy="12" r="2.500"/><circle cx="12" cy="12" r="2.500"/></g><circle cx="4" cy="4" r="1" fill="#222"/><circle cx="12" cy="4" r="1" fill="#222"/><circle cx="4" cy="12" r="1" fill="#222"/><circle cx="12" cy="12" r="1" fill="#222"/>',
      lift: '<path stroke="#222" stroke-width="1.500" d="M1 8h14M8 2v12M4 14l4-6 4 6"/>',
      deck: '<path fill="#444" stroke="#222" d="M2 6l8-3 5 3-8 3z"/><path stroke="#222" d="M3 7v5M7 9v5M14 7v5M10 8v4"/>',
      plug: '<path fill="#444" stroke="#222" d="M3 5l7-1 3 1v8H3z"/><path stroke="#bbb" d="M6 8v5"/>',
      stepsT: '<path fill="#777" stroke="#333" stroke-width=".7" d="M1 12l5-5 3-1 2-2 4 1-7 8z"/><path stroke="#333" stroke-width=".7" d="M5 9l7-3M7 11l6-4"/>',
      ramp: '<path fill="#999" stroke="#444" d="M2 11l6-7 6 3-3 6z"/><path stroke="#444" d="M2 11h9"/>',
      tv: '<rect x="3" y="2" width="11" height="8" fill="#7e6bcf" stroke="#446"/><path stroke="#555" stroke-width="1.500" d="M8 10v4"/>',

      // category grid
      cat1: '<path fill="#222" stroke="none" d="M8 1l6 4-2 8-8 1-3-7z"/><path fill="#d8c23a" stroke="none" d="M5 5l6 1-2 5-4-1z"/>',
      cat2: '<path fill="#d4935a" stroke="#744" stroke-width=".6" d="M2 8l6-5 6 5-1 6H3z"/><rect x="6" y="9" width="4" height="5" fill="#eee" stroke="none"/>',
      cat3: '<circle cx="8" cy="5" r="4" fill="#d33" stroke="none"/><circle cx="5" cy="11" r="4" fill="#2aa252" stroke="none"/><circle cx="11" cy="11" r="4" fill="#3864c9" stroke="none"/>',
      cat4: '<circle cx="8" cy="6" r="5" fill="#efe06a" stroke="#a98"/><rect x="6" y="11" width="4" height="3" fill="#888" stroke="none"/>',
      cat5: '<path fill="#b06a2c" stroke="#532" stroke-width=".6" d="M1 5l6-3 8 3-1 8-6 2-7-3z"/>',
      cat6: '<path stroke="#8a8a9a" stroke-width="1.500" d="M3 13L10 3M6 14l7-9"/>',
      cat7: '<path fill="#ccc" stroke="#777" d="M1 3l10 5v5L1 8z"/><path stroke="#555" stroke-width="1.400" d="M11 3h4M13 3v9M11 12h4"/>',
      cat8: '<circle cx="6" cy="6" r="4" fill="#777" stroke="#333"/><circle cx="11" cy="11" r="4" fill="#ddd" stroke="#333"/>',
      cat9: '<circle cx="8" cy="8" r="6" fill="#bbb" stroke="#888"/><circle cx="8" cy="8" r="2.500" fill="#e2e2e2" stroke="#888"/>',

      // toolbars
      back: '<path fill="#8d82b8" stroke="#665" stroke-width=".6" d="M9 2L2 8l7 6v-4h5V6H9z"/>',
      fwd: '<path fill="#ccc" stroke="#999" stroke-width=".6" d="M7 2l7 6-7 6v-4H2V6h5z"/>',
      classes: '<g stroke="#555"><path d="M2 8l5-4M2 8l5 0M2 8l5 4M8 4l4-2M8 4h5M8 12h5"/></g><circle cx="2" cy="8" r="1.500" fill="#888"/><circle cx="8" cy="4" r="1.500" fill="#888"/><circle cx="8" cy="12" r="1.500" fill="#888"/>',
      stack: '<ellipse cx="8" cy="4" rx="6" ry="2.500" fill="#666" stroke="none"/><ellipse cx="8" cy="8" rx="6" ry="2.500" fill="#777" stroke="#ddd" stroke-width=".5"/><ellipse cx="8" cy="12" rx="6" ry="2.500" fill="#666" stroke="#ddd" stroke-width=".5"/>',
      sheet: '<rect x="2" y="2" width="12" height="12" fill="#f5f5f5" stroke="#aaa"/><path stroke="#bbb" d="M5 11l3-3 2 2 3-4"/>',
      layer: '<circle cx="4" cy="8" r="3.500" fill="#a5835a" stroke="#333"/><path stroke="#d266c2" d="M8 8h4M10 3h5v10h-5"/>',
      docpage: '<path fill="#fff" stroke="#667" d="M4 2h6l3 3v9H4z"/><path stroke="#7a5fc0" stroke-width="2" d="M6 9h5M6 12h5"/>',
      fit: '<path fill="#f4f4f4" stroke="#333" d="M2 5l7-3 5 3-4 9-7-2z"/><circle cx="8" cy="8" r="2.500" stroke="#333"/>',
      fit2: '<path stroke="#444" stroke-width="1.800" d="M3 12l9-9M3 5h5M8 12h6"/>',
      mag: '<circle cx="6" cy="6" r="3.500" fill="#eee" stroke="#666"/><path stroke="#666" stroke-width="1.800" d="M9 9l5 5"/>',
      pinkpage: '<path stroke="#d361c3" stroke-width="1.200" d="M3 3l4-1v3h3V2h3v12H7V9H3z"/>',
      iso: '<path fill="#8cc6d9" stroke="#5a8fa5" d="M8 4l7 4-7 4-7-4z"/>',
      angle: '<path stroke="#222" stroke-width="1.300" d="M3 4l5 9 5-8"/><path stroke="#222" d="M11 9h4"/>',
      rings: '<g stroke="#666"><circle cx="8" cy="8" r="6"/><circle cx="8" cy="8" r="4"/><circle cx="8" cy="8" r="2"/></g>',
      purple: '<path fill="#8a78c8" stroke="#665" stroke-width=".6" d="M3 9l3-5 8-2-1 8-6 4z"/>',
      triPlay: '<path fill="#111" stroke="none" d="M5 4l6 4-6 4z"/>',
      steps1: '<path stroke="#333" stroke-width="1.500" d="M6 1l5 6-8 1M5 4l5 3"/><path fill="#4361c7" stroke="none" d="M3 11h10v1.500H3zM5 13.500h6V15H5z"/>',
      steps2: '<path fill="#a0bad0" stroke="#557" stroke-width=".6" d="M2 11h7v3H2z"/><path fill="#c7a24a" stroke="#664" stroke-width=".6" d="M4 3h9v3H4z"/><path stroke="#333" d="M9 11h3v-5M13 11h3"/>',
      steps3: '<path stroke="#333" d="M1 9h7M9 9h6M4 5h3v2M11 3v4M11 11v3"/><rect x="1" y="7" width="6" height="4" stroke="#333"/>',
      al1: '<path stroke="#556" d="M3 2v12M3 5h9v6H3"/>',
      al2: '<path stroke="#556" d="M8 2v12M3 5h10v6H3z"/>',
      al3: '<path stroke="#556" d="M13 2v12M13 5H4v6h9"/>',
      al4: '<path stroke="#556" d="M2 8h12M4 4h8v8H4z"/>',
      tools: '<path stroke="#555" stroke-width="2" d="M3 13L12 3"/><path stroke="#777" stroke-width="1.500" d="M3 3l9 10"/><path stroke="#222" d="M12 12h3"/>',
      snapoff: '<circle cx="9" cy="7" r="3.500" stroke="#333"/><path stroke="#111" stroke-width="1.300" d="M2 14L14 3M5 4l9 10"/>',
      gear: '<circle cx="8" cy="8" r="5.500" fill="#aaa" stroke="#666" stroke-dasharray="2 1"/><circle cx="8" cy="8" r="2.500" fill="#e9e9e9" stroke="#666"/>',
      leafg: '<path fill="#8a78c8" stroke="#665" stroke-width=".6" d="M2 8l5-5 7-1-1 7-5 5z"/><path stroke="#3f9a3f" stroke-width="1.500" d="M4 11l3 3 7-8"/>',
      leafp: '<circle cx="8" cy="7" r="5.500" fill="#7d78d0" stroke="#556"/><path stroke="#3f9a3f" stroke-width="1.500" d="M5 13h6"/>',
      chev: '<path stroke="#333" stroke-width="1.300" d="M3 6l5 5 5-5"/>',
      target: '<circle cx="8" cy="8" r="4.500" stroke="#222" stroke-width="2"/><path stroke="#222" stroke-width="1.500" d="M8 0v4M8 12v4M0 8h4M12 8h4"/>',
      fill: '<circle cx="7" cy="8" r="6" fill="#ddd" stroke="#444"/><path fill="#555" stroke="none" d="M7 2a6 6 0 0 1 6 6H7z"/>',
      pen: '<path stroke="#666" stroke-width="1.500" d="M3 11l8-8 2 2-8 8-3 1z"/><path stroke="#333" d="M1 15h14"/>',
      reddoc: '<path fill="#d7422c" stroke="#8a2a1a" stroke-width=".6" d="M3 1h7l3 3v11H3z"/><circle cx="8" cy="8" r="2" fill="#f6d0c4" stroke="none"/>',
      home: '<path fill="#b33c2c" stroke="#333" stroke-width=".6" d="M8 2L1 8h2v6h10V8h2z"/><rect x="6" y="9" width="4" height="5" fill="#fff" stroke="none"/>',
      homeg: '<path stroke="#b99" d="M8 3L2 8h2v5h8V8h2z"/>',
      folder: '<path fill="#bfbfcf" stroke="#667" stroke-width=".7" d="M1 4h5l1 2h8v8H1z"/>',
      foldup: '<path fill="#cfd7a8" stroke="#887" stroke-width=".7" d="M2 5h5l1 2h6v7H2z"/><path stroke="#666" d="M9 5l2-3 2 3"/>',
      symbol: '<circle cx="8" cy="8" r="6" stroke="#b9a0a0"/><path stroke="#b9a0a0" d="M4 3h6"/>',
      navCl: '<g stroke="#cfe2ff"><path d="M2 8l5-4M2 8l5 4M8 4h6M8 12h6"/></g><circle cx="2" cy="8" r="1.500" fill="#cfe2ff"/>',
      navStack: '<ellipse cx="8" cy="4" rx="5" ry="2.500" fill="#777" stroke="none"/><ellipse cx="8" cy="8" rx="5" ry="2.500" fill="#888" stroke="none"/><ellipse cx="8" cy="12" rx="5" ry="2.500" fill="#777" stroke="none"/>',
      navSheet: '<rect x="2" y="2" width="12" height="12" fill="#eee" stroke="#667"/><rect x="8" y="8" width="5" height="5" fill="#999" stroke="none"/>',
      navImg: '<rect x="2" y="2" width="12" height="12" fill="#eee" stroke="#667"/><path stroke="#667" d="M3 9l3-3 3 3 3-3"/>',
      navDoc: '<path fill="#eee" stroke="#667" d="M3 1h7l3 3v11H3z"/><path stroke="#77a" d="M5 8h6M5 11h6"/>',
      navRef: '<path fill="#fff" stroke="#222" d="M5 5l4-3 5 3v9H5z"/><path stroke="#222" d="M2 8h5M5 6l2 2-2 2"/>',
      eye: '<ellipse cx="8" cy="8" rx="7" ry="4.500" fill="#bbb" stroke="#333"/><circle cx="8" cy="8" r="2.200" fill="#222" stroke="none"/>',
      x: '<path stroke="#111" stroke-width="2" d="M3 3l10 10M13 3L3 13"/>',
      check: '<path stroke="#111" stroke-width="2" d="M3 9l3 5 7-12"/>',
      sn1: '<path stroke="#4a4a7a" stroke-width="1.400" d="M5 1v14M11 1v14M1 5h14M1 11h14"/>',
      sn2: '<rect x="2" y="3" width="12" height="10" fill="#dde" stroke="#4a4a7a"/><rect x="7" y="7" width="2" height="2" fill="#4a4a7a" stroke="none"/>',
      sn3: '<circle cx="8" cy="8" r="6" fill="#cdd" stroke="#4a4a7a"/><path stroke="#4a4a7a" d="M8 0v16M0 8h16"/>',
      sn4: '<path stroke="#333" d="M1 3l14 10M1 13L15 3"/>',
      sn5: '<rect x="2" y="5" width="5" height="6" stroke="#333"/><path stroke="#333" stroke-dasharray="1.500 1.500" d="M8 8h7"/>',
      sn6: '<path stroke="#333" d="M1 4l14 9"/><path stroke="#88a" stroke-dasharray="1.500 1" d="M2 1l9 6"/>',
      sn7: '<path stroke="#333" d="M3 12l3-8 6 3-3 7z"/><path stroke="#88a" stroke-dasharray="1.500 1" d="M8 3l6 2"/>',
      sn8: '<circle cx="11" cy="6" r="4" stroke="#333"/><path stroke="#333" d="M1 13l12-5"/>'
    };

    function svg(name) {
      return `<svg width="14" height="14" viewBox="0 0 16 16" fill="none" stroke="#333">${ICONS[name]}</svg>`;
    }

    function cells(id, names, cellClass) {
      document.getElementById(id).innerHTML = names.map(n => {
        const picked = n.startsWith("*");
        const name = picked ? n.slice(1) : n;
        return `<div class="${cellClass}${picked ? " picked" : ""}">${svg(name)}</div>`;
      }).join("");
    }

    cells("basicTools", [
      "arrowTool", "hand", "fly", "magTool",
      "text", "callout", "xmark", "sphere",
      "line", "dbl", "rect", "rrect",
      "circle", "ellipse", "arc", "squig",
      "free", "poly", "fold", "hex",
      "spiral", "dropper", "wand", "eyeArrow",
      "boxes", "polyO", "rotate", "mirror",
      "knife", "cross", "bird", "fillet",
      "chamfer", "corner", "*eraser", "slider",
      "dim", "dim2", "tri", "wave",
      "gauge", "spot", "protractor", "blob"
    ], "cell");

    const toolSets = [
      ["lInst", "Lighting Inst..."], ["lPipe", "Lighting Pipe"], ["lPip2", "Lighting Pip..."], ["truss", "Straight Truss"],
      ["curved", "Curved Truss"], ["hoist", "Hoist"], ["origin", "Hoist Origin"], ["lPos", "Lighting Pos..."],
      ["soft", "Soft Goods"], ["focus", "Focus Point"], ["lAcc", "Lighting Acc..."], ["align", "Align and Di..."],
      ["gang", "Ganging"], ["instr", "Instrument..."], ["photo", "Photometer"], ["photoM", "Photometric..."],
      ["lift", "Stage Lift"], ["deck", "Stage Deck"], ["plug", "Stage Plug"], ["stepsT", "Stage Steps"],
      ["ramp", "Stage Ramp"], ["tv", "Television"]
    ];
    document.getElementById("toolSets").innerHTML = toolSets.map(([ic, label]) =>
      `<li class="${label === "Stage Steps" ? "picked" : ""}">${svg(ic)}<span>${label}</span></li>`).join("");

    cells("cats", ["*cat1", "cat2", "cat3", "cat4", "cat5", "cat6", "cat7", "cat8", "cat9"], "cell");

    document.getElementById("snap").innerHTML = [
      ["sn1", ""], ["sn2", "dim"], ["sn3", "dim"], ["sn4", "dim"],
      ["sn5", "dim"], ["sn6", ""], ["sn7", ""], ["sn8", ""]
    ].map(([ic, cls]) => `<div class="${cls}">${svg(ic)}</div>`).join("");

    document.getElementById("navSeg").innerHTML =
      ["navCl", "navStack", "navSheet", "navImg", "navDoc", "navRef"]
        .map((ic, i) => `<span class="${i === 0 ? "active" : ""}">${svg(ic)}</span>`).join("");

    // rulers: a label every 2' = 50px
    const hRuler = document.getElementById("hRuler");
    hRuler.insertAdjacentHTML("beforeend", `<div class="hcell first">"</div>`);
    for (let ft = 122; ft <= 160; ft += 2) {
      hRuler.insertAdjacentHTML("beforeend", `<div class="hcell">${ft}'-0"</div>`);
    }
    const vRuler = document.getElementById("vRuler");
    for (let ft = 160; ft >= 136; ft -= 2) {
      vRuler.insertAdjacentHTML("beforeend", `<div class="vcell${ft === 160 ? " first" : ""}">${ft}'-0"</div>`);
    }

    const classes = [
      ["Ceiling", "x2", "tw"], ["Main", "x2", "sub"], ["Columns", "e"], ["Dimension", "e"], ["Doors", "e"], ["Floor", "e"],
      ["Glazing", "e", "tw"], ["Clear", "e", "sub"], ["None", "e", "cur"], ["NonPlot", "x2"], ["NonPlot", "x2", "tw"]
    ];
    document.getElementById("classRows").innerHTML = classes.map(([name, vis, kind]) => `
      <div class="cl d-flex align-items-center">
        <span class="v1">${vis === "e" ? svg("eye") : ""}</span>
        <span class="v2">${vis === "x2" ? svg("x") : ""}</span>
        <span class="v3">${kind === "cur" ? svg("check") : ""}</span>
        ${kind === "tw" ? '<i class="tw"></i>' : ""}
        <span class="nm${kind === "sub" ? " sub" : ""}${kind === "tw" ? " kid" : ""}${kind === "cur" ? " fw-bold" : ""}">${name}</span>
      </div>`).join("");

    document.querySelectorAll("[data-i]").forEach(el => {
      el.innerHTML = svg(el.dataset.i === "tri" ? "triPlay" : el.dataset.i);
    });
    document.querySelectorAll("[data-c]").forEach(el => { el.innerHTML = CHEV_D; });
    document.querySelectorAll("[data-u]").forEach(el => { el.innerHTML = CHEV_UD; });
  </script>
</body>

</html>
